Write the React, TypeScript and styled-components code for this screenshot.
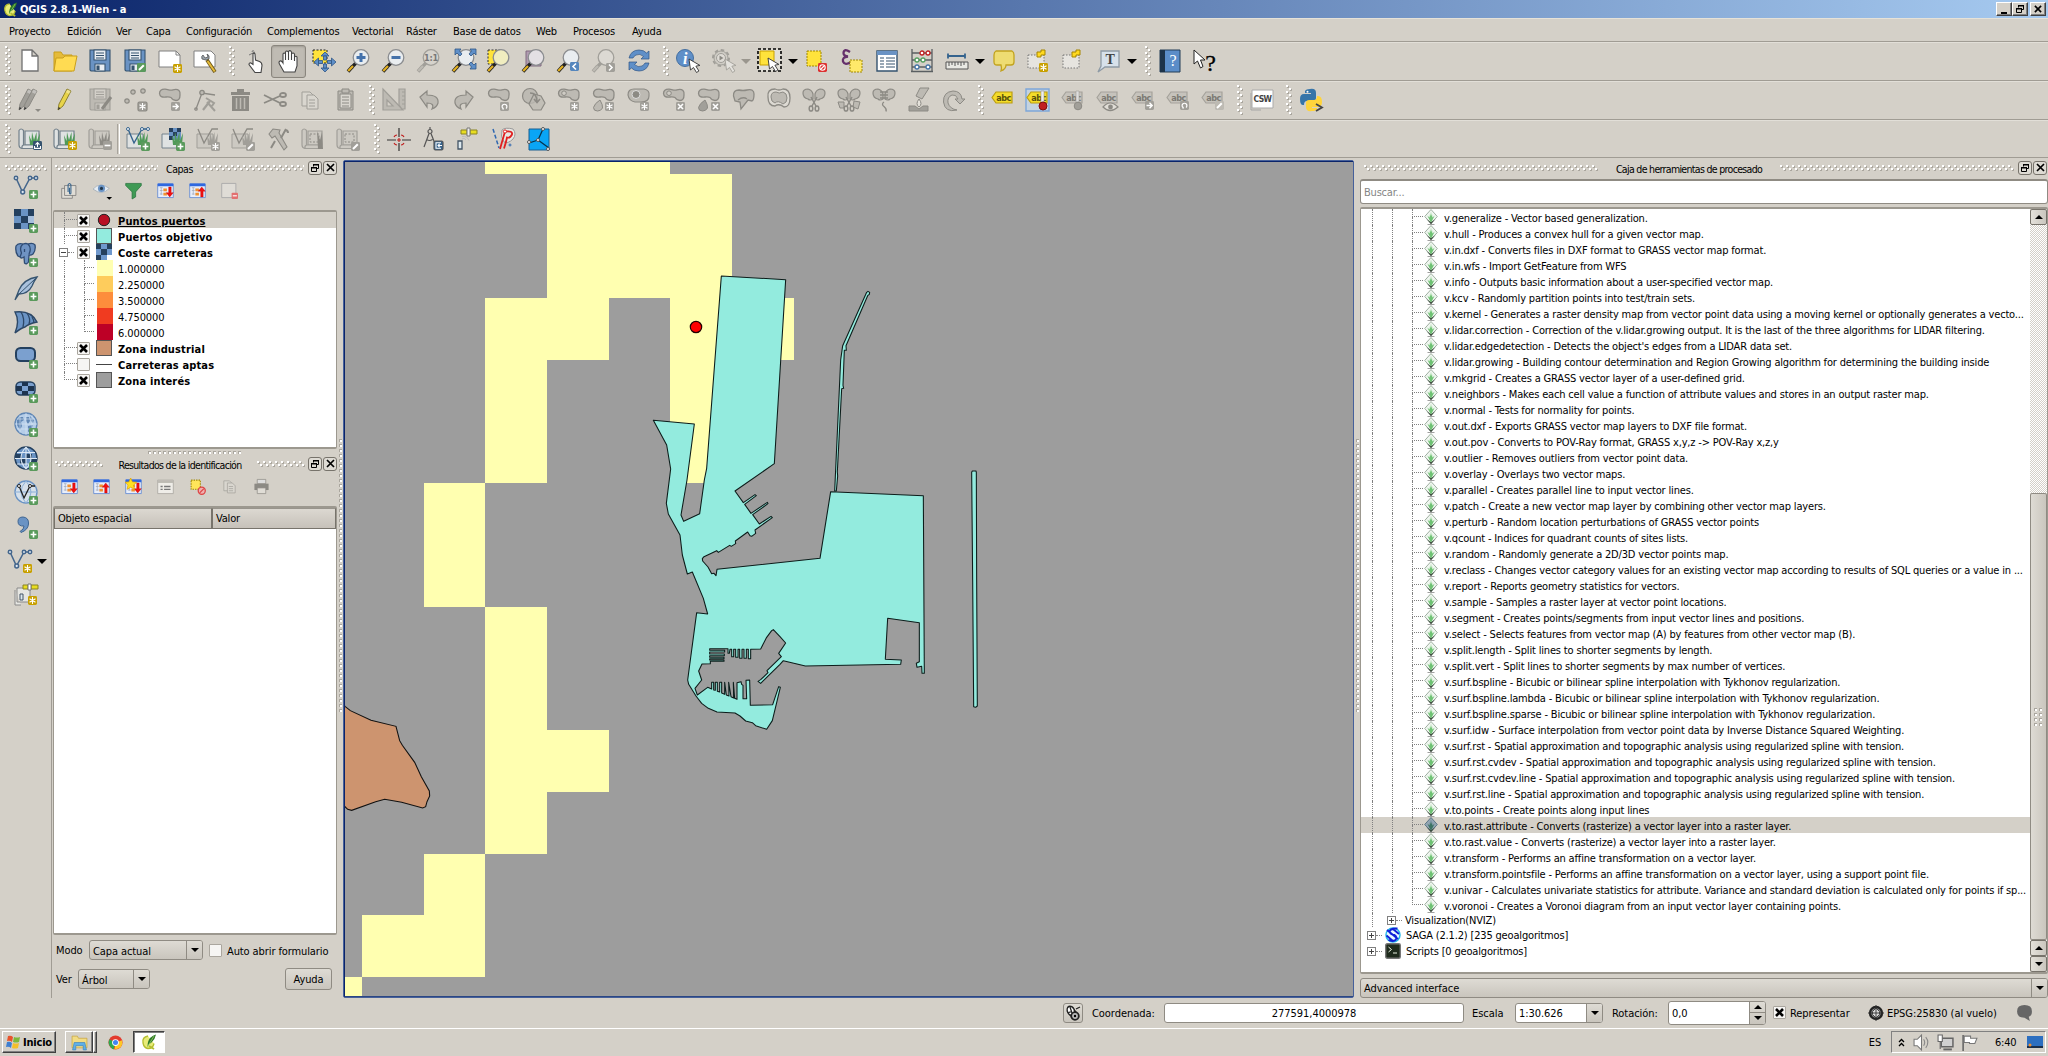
import React from "react";
import styled, { createGlobalStyle } from "styled-components";

const face = "#d4d0c8";
const font = '"DejaVu Sans Condensed", "DejaVu Sans", "Liberation Sans", sans-serif';

const Global = createGlobalStyle`
  html, body { margin: 0; padding: 0; background: ${face}; }
  body { font: 11px ${font}; font-stretch: condensed; color: #000; letter-spacing: -0.2px; overflow: hidden; }
  * { box-sizing: border-box; }
`;

/* ---------- shared pieces ---------- */

const Svg = styled.svg<{ $w?: number }>`
  width: ${(p) => p.$w ?? 24}px;
  height: ${(p) => p.$w ?? 24}px;
  flex: none;
  display: block;
  overflow: visible;
`;

const zig = `url("data:image/svg+xml,%3Csvg xmlns='http://www.w3.org/2000/svg' width='6' height='6'%3E%3Cpath d='M1 1h2v2H1zM4 4h2v2H4z' fill='%23aaa69e'/%3E%3Cpath d='M0 0h2v2H0zM3 3h2v2H3z' fill='%23fff'/%3E%3C/svg%3E")`;
const single = `url("data:image/svg+xml,%3Csvg xmlns='http://www.w3.org/2000/svg' width='5' height='5'%3E%3Cpath d='M0 0h3v3H0z' fill='%23aaa69e'/%3E%3Cpath d='M1 1h2v2H1z' fill='%23fff'/%3E%3C/svg%3E")`;

const HGrip = styled.div<{ $w?: number }>`
  height: 6px;
  ${(p) => (p.$w ? `width: ${p.$w}px; flex: none;` : "flex: 1;")}
  background: ${zig} 0 0 / 6px 6px;
`;

const VGrip = styled.div<{ $w?: number }>`
  width: ${(p) => p.$w ?? 13}px;
  height: 30px;
  flex: none;
  display: flex;
  justify-content: flex-end;
  padding-right: 1px;
  &::after { content: ""; width: 6px; height: 30px; background: ${zig} 0 0 / 6px 6px; }
`;

const Screen = styled.div`
  width: 2048px;
  height: 1056px;
  display: flex;
  flex-direction: column;
  background: ${face};
  overflow: hidden;
  cursor: default;
  white-space: nowrap;
`;

/* ---------- title bar and menus ---------- */

const TitleBar = styled.div`
  height: 18px;
  flex: none;
  display: flex;
  align-items: center;
  gap: 2px;
  padding: 0 2px 0 3px;
  background: linear-gradient(90deg, #0a246a, #a6caf0);
  color: #fff;
  font-weight: bold;
  font-size: 11px;
  letter-spacing: -0.1px;
`;
const Grow = styled.div` flex: 1; `;
const WinBtn = styled.div<{ $gap?: boolean }>`
  width: 16px;
  height: 14px;
  margin-left: ${(p) => (p.$gap ? 2 : 0)}px;
  background: ${face};
  border: 1px solid;
  border-color: #fff #404040 #404040 #fff;
  box-shadow: inset -1px -1px #808080;
  display: flex;
  align-items: center;
  justify-content: center;
`;
const WinBtns = styled.div` display: flex; `;

const MenuBar = styled.div`
  height: 24px;
  flex: none;
  display: flex;
  align-items: center;
  padding: 2px 0 0 9px;
  border-top: 1px solid #e6e2d8;
  border-bottom: 1px solid #a09c94;
`;
const MenuItem = styled.div<{ $w: number }>` width: ${(p) => p.$w}px; `;

/* ---------- toolbars ---------- */

const ToolBar = styled.div<{ $h: number }>`
  height: ${(p) => p.$h}px;
  flex: none;
  display: flex;
  align-items: center;
  padding: 0 0 1px 1px;
  border-top: 1px solid #e2dfd8;
  border-bottom: 1px solid #a09c94;
`;
const Slot = styled.div<{ $on?: boolean }>`
  width: 35px;
  height: 34px;
  flex: none;
  display: flex;
  align-items: center;
  justify-content: center;
  ${(p) => p.$on && "border: 1px solid #8a867e; border-radius: 3px; background: #bfbbb3; box-shadow: inset 0 1px 2px #a09c94; height: 33px;"}
`;
const Drop = styled.div<{ $off?: boolean }>`
  width: 12px;
  flex: none;
  display: flex;
  justify-content: center;
  &::after {
    content: "";
    border: 5px solid transparent;
    border-bottom: 0;
    border-top-color: ${(p) => (p.$off ? "#9a968e" : "#000")};
  }
`;
const Sep = styled.div` width: 3px; height: 30px; border-left: 1px solid #a8a49c; border-right: 1px solid #fff; `;

/* ---------- badges drawn over icons ---------- */

const Badge = ({ k, c = "#5a9a5c", x = 15, y = 15 }: { k: string; c?: string; x?: number; y?: number }) => (
  <g transform={`translate(${x} ${y})`}>
    <rect x="0" y="0" width="9" height="9" rx="1.4" fill={c} />
    <g stroke="#fff" strokeWidth="1.6" fill="none">
      {k === "plus" && <path d="M4.5 1.6v5.8M1.6 4.5h5.8" />}
      {k === "minus" && <path d="M1.6 4.5h5.8" />}
      {k === "star" && <path strokeWidth="1.1" d="M4.5 1v7M1.5 2.7l6 3.6M1.5 6.3l6-3.6" />}
      {k === "x" && <path d="M2 2l5 5M7 2L2 7" />}
      {k === "right" && <path d="M1.5 4.5h5M4.5 1.8l2.7 2.7-2.7 2.7" strokeWidth="1.4" />}
      {k === "pen" && <path d="M2 7l4.8-4.8" strokeWidth="2" />}
      {k === "lt" && <path d="M6 1.5L3 4.5l3 3" />}
      {k === "gt" && <path d="M3 1.5l3 3-3 3" />}
      {k === "rot" && <path d="M3 6.5a2.4 2.4 0 1 1 3 0M3 7.6l.2-2" strokeWidth="1.2" />}
      {k === "up" && <path d="M4.5 6V2M2.5 3.6l2-2 2 2M1.5 5v2.4h6V5" strokeWidth="1.1" />}
      {k === "no" && <><circle cx="4.5" cy="4.5" r="2.7" strokeWidth="1.1" /><path d="M3 6l3-3" strokeWidth="1.1" /></>}
      {k === "in" && <path d="M7 1.8H2v5.4h5M8 4.5H4M5.6 2.9L4 4.5l1.6 1.6" strokeWidth="1.1" />}
    </g>
  </g>
);

const G = "#a19f99";
const GD = "#8c8a84";
const GL = "#bdbab3";
const gold = "#c8a000";

const Blob = ({ f = GL, s = GD, ring = false }: { f?: string; s?: string; ring?: boolean }) => (
  <g>
    <path d="M1.500 5.500Q1.500 1 7 1.200c4 .3 5 1.600 8 .6C21 .3 22.500 3.500 22 7q0 5.500-4 5.500-3 0-5-3-2-1-5-.5Q2 10 1.500 5.500z" fill={f} stroke={s} strokeWidth="1.300" />
    {ring && <circle cx="7" cy="5.200" r="2.300" fill="#cfccc5" stroke={s} />}
  </g>
);
const Lens = ({ f = "#e9edf0", s = "#8b8d90", h = "#e3b021", d = "#222" }: { f?: string; s?: string; h?: string; d?: string }) => (
  <g>
    <path d="M9 14L4.500 18.500" stroke={d} strokeWidth="3.200" />
    <path d="M5.500 17.500L1 22.500" stroke={d} strokeWidth="3.600" />
    <path d="M6 17L1.200 22" stroke={h} strokeWidth="2.200" />
    <circle cx="14" cy="8.500" r="7.800" fill={f} stroke={s} strokeWidth="1.300" />
  </g>
);
const Pointer = ({ x = 0, y = 0, f = "#fff", s = "#333" }: { x?: number; y?: number; f?: string; s?: string }) => (
  <path transform={`translate(${x} ${y})`} d="M0 0l1.500 11 3-2.500 3 5 2.400-1.500-3-4.800 4-.8z" fill={f} stroke={s} strokeWidth="0.900" />
);
const VLine = ({ c = "#44668c" }: { c?: string }) => (
  <g stroke={c} strokeWidth="1.500" fill="#dfe8f2">
    <path d="M2 3l6.500 14L16 3h6" fill="none" />
    <circle cx="2" cy="3" r="1.700" /><circle cx="8.700" cy="17" r="1.900" /><circle cx="16" cy="3" r="1.700" /><circle cx="22" cy="3" r="1.700" />
  </g>
);
const Grass = ({ c = "#4f9a58" }: { c?: string }) => (
  <path d="M12 18L11 8l2.500 6L14 5l2 8 2.500-8 .3 9L22 6l-1 12z" fill={c} />
);
const Region = ({ c = "#74828c", f = "#dfe2e2" }: { c?: string; f?: string }) => (
  <g fill={f} stroke={c} strokeWidth="1.200">
    <path d="M7 4h14v14H7z" />
    <path d="M1 3.500q2-3 4.500 0V18q5 0 12 0 3 1.500 0 3.500H4Q1 21 1 18z" />
    <path d="M5.500 18q-2 .5-1.500 3.500" fill="none" />
  </g>
);
const Scissor = ({ c = GD }: { c?: string }) => (
  <g fill="none" stroke={c} strokeWidth="1.500"><path d="M9 9l5 9M15 9l-5 9" /><ellipse cx="9" cy="20.500" rx="1.800" ry="2.600" /><ellipse cx="15" cy="20.500" rx="1.800" ry="2.600" /></g>
);
const Wings = () => (
  <path d="M1 5q0-4 5-4 4 1 5 5v5q-3 2-5 0-5-1-5-6zM23 5q0-4-5-4-4 1-5 5v5q3 2 5 0 5-1 5-6z" fill={GL} stroke={GD} strokeWidth="1.200" />
);
const Label = ({ f = "#c6c3bc", s = "#a5a29b", t = "#7b7973" }: { f?: string; s?: string; t?: string }) => (
  <g>
    <path d="M1 9.500l4-5.500h16v11H5z" fill={f} stroke={s} strokeWidth="1.200" />
    <text x="12.500" y="12.700" textAnchor="middle" fontFamily="DejaVu Sans" fontSize="9" fontWeight="bold" letterSpacing="-.6" fill={t}>abc</text>
  </g>
);
const Pencil = ({ f = "#e8d44a", s = "#8d8130", x = 0 }: { f?: string; s?: string; x?: number }) => (
  <g transform={`translate(${x} 0)`}><path d="M14 1l4 2-8 15-5 4 1-6z" fill={f} stroke={s} /><path d="M14.500 1.500l3.300 1.600-1.600 3-3.400-1.800z" fill="#fff" opacity=".35" /><path d="M5 22l.6-3 2 1.200z" fill="#333" /></g>
);
const Floppy = ({ f = "#6a93c4", s = "#35536f", l = "#e9eef3" }: { f?: string; s?: string; l?: string }) => (
  <g stroke={s} strokeWidth="1.100"><path d="M2 1h20v21H3l-1-1z" fill={f} /><path d="M6 1h12v10H6z" fill={l} /><path d="M8 4h8M8 6.500h8M8 9h8" /><path d="M7 15h10v7H7z" fill={l} /><path d="M9 17h2v3.500H9z" fill={s} /></g>
);
const Elephant = ({ c = "#6f93c3" }: { c?: string }) => (
  <g fill={c} stroke="#2f4c74" strokeWidth="1.300">
    <path d="M2 3Q4-.5 9 1q3-1 5 0 5-1.500 7 1 1 5-2 9-2 1.500-4 1l-.5 7q-2 3-4 1l-.5-6q-3 2-4 0l-2-1Q1 9 2 3z" />
    <path d="M9 1Q5 4 7.500 10L6 14M14 1q4 4 1 10M10.500 6v3" fill="none" />
  </g>
);
const WinTree = ({ children }: { children?: React.ReactNode }) => (
  <g><path d="M1 3h22v19H1z" fill="#e8eefa" stroke="#4b7ad0" /><path d="M1 2h22v4H1z" fill="#2f68e0" /><path d="M4 8h4M4 12h4M4 17h4M6 8v10" stroke="#a0a8b8" /><path d="M9 9h5v4H9zM9 15h5v4H9z" fill="#f09030" />{children}</g>
);
const ArrowDown = <path d="M16.500 7h3.500v8h3l-5 6-5-6h3.500z" fill="#f01010" stroke="#b00" strokeWidth=".5" />;
const ArrowUp = <path d="M16.500 21h3.500v-8h3l-5-6-5 6h3.500z" fill="#f01010" stroke="#b00" strokeWidth=".5" />;

const icons: Record<string, React.ReactNode> = {
  new: <path d="M4 1h10l6 6v15H4zM14 1v6h6" fill="#fff" stroke="#707070" strokeWidth="1.300" />,
  open: <g stroke="#c99f1c" strokeWidth="1"><path d="M1 3h7l2 3h9v16H1z" fill="#e5bb3a" /><path d="M3 9h7l2-2h12l-3 15H1z" fill="#ffdb52" /></g>,
  save: <Floppy />,
  saveas: <g><Floppy /><Badge k="pen" x={14} y={14} /></g>,
  composer: <g><path d="M1 2h17l4 4v12H1z" fill="#fff" stroke="#808080" /><path d="M18 2v4h4" fill="none" stroke="#808080" /><Badge k="star" c={gold} /></g>,
  composerMgr: <g><path d="M1 2h17l4 4v12H1z" fill="#fff" stroke="#808080" /><path d="M10 6l2 3 3-1-1-3q3 1 2 5l-3 1-4-1q-1-3 1-4z" fill="#9aa4ac" stroke="#555" strokeWidth=".8" /><path d="M14 11l8 12" stroke="#6a5518" strokeWidth="3.600" /><path d="M14.500 12l7.200 10.500" stroke="#e5bb3a" strokeWidth="2" /></g>,
  touch: <g><path d="M10 3q0-2 2-1M7 6l6-3" stroke="#777" fill="none" /><path d="M11 4.500q1.500-1 2 .5l.5 6 4 1.500q2.500 1 2.500 4l-1 7h-6l-6-8q0-2 2-1.500l2 1.500z" fill="#fff" stroke="#444" strokeWidth="1.100" /></g>,
  hand: <path d="M7 23l-4-7q-2-3 0-4 1.500-.5 3 2V5q1-2 2.500 0V3q1-2 3 0v-.5q1.500-2 3 .5v2q1.500-2 3 0v3q1.500-1.500 2.500 0v9l-2 6z M8.500 4v7M11.500 3v8M14.500 3v8M17.500 6v6" fill="#fff" stroke="#444" strokeWidth="1.100" />,
  pansel: <g><path d="M1 1h14v13H1z" fill="#ffe33b" stroke="#222" strokeDasharray="2 1.500" /><g fill="#5f8fc8" stroke="#2f5585" strokeWidth=".8"><path d="M13 3l4 4h-8zM13 23l4-4h-8zM2 13l4.500-4v8zM24 13l-4.500-4v8z" /><path d="M11.500 7h3v4h-3zM11.500 15h3v4h-3zM6.500 11.500h4v3h-4zM15.500 11.500h4v3h-4z" /></g></g>,
  zin: <g><Lens /><path d="M14 4v9M9.500 8.500h9" stroke="#4472ab" strokeWidth="3" /></g>,
  zout: <g><Lens /><path d="M9.500 8.500h9" stroke="#4472ab" strokeWidth="3" /></g>,
  z11: <g><Lens f="#d6d3cc" s={G} h={GL} d={G} /><text x="14" y="12" fontSize="9" fontWeight="bold" textAnchor="middle" fill="#777">1:1</text></g>,
  zfull: <g><Lens /><path d="M3 0h6L7.500 2l2.500 3-2 2-3-3-2 2zM24 0h-6l1.500 2L17 5l2 2 3-3 2 2zM24 20h-6l1.500-2-2.500-3 2-2 3 3 2-2z" fill="#5f8fc8" stroke="#2f5585" strokeWidth=".8" /></g>,
  zsel: <g><path d="M1 1h13v14H1z" fill="#ffe33b" stroke="#333" strokeDasharray="2 1.500" /><Lens f="#f0edc0" /></g>,
  zlayer: <g><path d="M4 2h15v15H4z" fill="#b09bb0" stroke="#806a80" /><Lens f="#e4e0e4" /></g>,
  zprev: <g><Lens /><Badge k="lt" c="#5586bd" x={13} y={13} /></g>,
  znext: <g><Lens f="#dcd9d3" s={G} h={GL} d={G} /><Badge k="gt" c={G} x={14} y={14} /></g>,
  refresh: <g fill="#5f8fc8" stroke="#2f5585" strokeWidth=".7"><path d="M2 9Q4 1 12 1q5 0 7.500 3L22 2v8h-8l2.500-2.500Q13 4 9 6q-2 1-3 3z" /><path d="M22 14q-2 8-10 8-5 0-7.500-3L2 21v-8h8l-2.500 2.500Q11 19 15 17q2-1 3-3z" /></g>,
  identify: <g><circle cx="9" cy="9" r="8.500" fill="#5f8fc8" stroke="#456f9f" /><text x="9" y="15" fontFamily="Liberation Serif" fontStyle="italic" fontWeight="bold" fontSize="16" textAnchor="middle" fill="#fff">i</text><Pointer x={13} y={10} /></g>,
  action: <g><circle cx="10" cy="9" r="8" fill="none" stroke={G} strokeWidth="2" strokeDasharray="3.500 2.700" /><circle cx="10" cy="9" r="7" fill="#cfccc5" stroke={G} /><circle cx="10" cy="9" r="4.500" fill="#dedbd5" stroke={G} /><path d="M8.500 6.500l4 2.500-4 2.500z" fill={GD} /><Pointer x={14} y={10} f="#e4e2dd" s={G} /></g>,
  select: <g><path d="M0 0h23v22H0z" fill="#e2e0d8" stroke="#000" strokeWidth="1.600" strokeDasharray="3 2" /><path d="M2 2h14v14H2z" fill="#ffe33b" stroke="#c8a000" /><Pointer x={10} y={9} /></g>,
  desel: <g><path d="M2 2h14v15H2z" fill="#ffe33b" stroke="#a08800" strokeDasharray="2 1" /><Badge k="no" c="#dd3030" x={13} y={14} /></g>,
  expr: <g><path d="M10 3Q4-1 3.500 4q0 3 4.500 3.500-6 .5-5 5 2 4.500 8 .5" fill="none" stroke="#65306b" strokeWidth="2.300" /><path d="M10 11h12v12H10z" fill="#ffe96a" stroke="#a08800" strokeDasharray="2 1" /></g>,
  table: <g><path d="M2 2h20v20H2z" fill="#fff" stroke="#35536f" strokeWidth="1.400" /><path d="M2 2h20v4H2z" fill="#6a93c4" /><path d="M5 9h4M11 9h9M5 12h4M11 12h9M5 15h4M11 15h9M5 18h4M11 18h9" stroke="#35536f" strokeWidth="1.200" /></g>,
  abacus: <g strokeWidth="1.300"><path d="M2 0v23M22 0v23M1 22.500h22M2 4h20M2 11h20M2 18h20" stroke="#5a5f62" fill="none" /><g fill="#fff"><g stroke="#c02020"><circle cx="12" cy="4" r="2" /><circle cx="18" cy="4" r="2" /></g><g stroke="#55a060"><circle cx="7" cy="11" r="2" /><circle cx="13" cy="11" r="2" /></g><g stroke="#4575a8"><circle cx="7" cy="18" r="2" /><circle cx="18" cy="18" r="2" /></g></g></g>,
  measure: <g fill="none" stroke="#35638d"><path d="M3 7h17M3 4.500v5M20 4.500v5" strokeWidth="1.800" /><path d="M1 13h22v7H1z" stroke="#555" fill="#e9e9e4" /><path d="M4 13v4M7 13v3M10 13v4M13 13v3M16 13v4M19 13v3" stroke="#555" /></g>,
  tip: <path d="M4 2h16q2 1 2 4v7q0 3-3 3h-5q0 4-5 6 1-3 0-6H5q-3 0-3-3V6q0-3 2-4z" fill="#eedc72" stroke="#c2a31f" strokeWidth="1.300" />,
  bmnew: <g><path d="M1 6h16v13H1z" fill="#e6e4df" stroke="#777" strokeDasharray="1.500 1.500" /><path d="M10 3h4V1h4v5h-4v2h-4z" fill="#ffd91f" stroke="#a58500" /><Badge k="star" c={gold} x={12} y={14} /></g>,
  bmshow: <g><path d="M1 6h16v13H1z" fill="#e6e4df" stroke="#777" strokeDasharray="1.500 1.500" /><path d="M10 3h4V1h4v5h-4v2h-4z" fill="#ffd91f" stroke="#a58500" /></g>,
  anno: <g><path d="M4 2h18v16H8l-7 5 3-6z" fill="#d7e1ea" stroke="#8e9aa5" strokeWidth="1.300" /><text x="13" y="15" fontFamily="Liberation Serif" fontSize="14" fontWeight="bold" textAnchor="middle" fill="#444">T</text></g>,
  help: <g><path d="M2 1h20v22H2z" fill="#5b8dc8" stroke="#223c57" /><path d="M2 1h5v22H2z" fill="#1d3349" /><text x="15" y="17" fontFamily="Liberation Serif" fontSize="16" textAnchor="middle" fill="#fff">?</text></g>,
  whats: <g><path d="M1 1v14l3.500-3 3 7 2.500-1.500L7.500 11h4.500z" fill="#fff" stroke="#222" /><text x="17.500" y="21.500" fontFamily="Liberation Serif" fontSize="24" textAnchor="middle" fill="#000" stroke="#000" strokeWidth=".3">?</text></g>,

  edits: <g><Pencil f={G} s={GD} x={-4} /><Pencil f={G} s={GD} x={1} /><path d="M17 21h6l-3 3z" fill={GD} /></g>,
  pencil: <Pencil />,
  saveG: <g><Floppy f={GL} s={G} l="#d2cfc8" /><path d="M14 21l9-12" stroke={GD} strokeWidth="3" /></g>,
  ptsG: <g fill={GL} stroke={GD} strokeWidth="1.200"><circle cx="10" cy="4" r="2.200" /><circle cx="20" cy="3" r="2.200" /><circle cx="4" cy="13" r="2.200" /><Badge k="star" c={G} x={15} y={14} /></g>,
  moveG: <g><Blob /><Badge k="right" c={G} x={13} y={14} /></g>,
  nodeG: <g fill="none" stroke={GD} strokeWidth="1.300"><path d="M3 21L9 5l13 2" /><circle cx="9" cy="4.500" r="2.200" fill={GL} /><circle cx="3" cy="21" r="1.200" /><path d="M10 22l7-9" strokeWidth="2.200" stroke={G} /><path d="M13 10l8 5-2 3M14 14l8 9" strokeWidth="2" stroke={G} /></g>,
  trash: <g fill={GD}><path d="M3 4h19v3H3zM9 1h7v3H9z" /><path d="M4 8h17v15H4z" /><path d="M8.500 10v11M12.500 10v11M16.500 10v11" stroke={GL} strokeWidth="1.500" /></g>,
  cut: <g fill="none" stroke={GD} strokeWidth="1.800"><path d="M1 7l16 8M1 15l16-7" /><ellipse cx="20" cy="7" rx="3" ry="2" /><ellipse cx="20" cy="16" rx="3" ry="2" /></g>,
  copy: <g fill="#d9d6cf" stroke={G}><path d="M4 4h8l3 3v11H4z" /><path d="M9 7h7l4 4v10H9z" /><path d="M11 12h6M11 15h6M11 18h6" /></g>,
  paste: <g fill="#d9d6cf" stroke={GD}><path d="M5 3h15v19H5z" fill={GL} /><path d="M7 6h11v14H7z" /><path d="M9 1h7v4H9z" fill={GL} /><path d="M9 9h7M9 12h7M9 15h7M9 18h7" /></g>,
  cad: <g fill={GL} stroke={G} strokeWidth="1.200"><path d="M1 1v21h20zM5 12v6h6z" fillRule="evenodd" /><path d="M17 1h6v20h-3l-3-4z" /><path d="M20 4h3M20 8h3M20 12h3M20 16h3" /></g>,
  undo: <path d="M3 9l7-6v4q12 0 11 8-1 4-6 6 3-6-5-6v4z" fill={GL} stroke={GD} strokeWidth="1.200" />,
  redo: <path d="M21 9l-7-6v4q-12 0-11 8 1 4 6 6-3-6 5-6v4z" fill={GL} stroke={GD} strokeWidth="1.200" />,
  rotG: <g><Blob /><Badge k="rot" c={G} x={13} y={14} /></g>,
  simp: <g fill={GL} stroke={GD} strokeWidth="1.200"><circle cx="8" cy="8" r="7.500" /><path d="M12 6l7 2 4 7-4 7h-8l-4-6z" fillOpacity=".8" /><path d="M8 5q7 0 7 9M12 11l3 3.500 3-3.500" fill="none" strokeWidth="1.600" /></g>,
  ringG: <g><Blob ring /><Badge k="star" c={G} x={13} y={14} /></g>,
  partG: <g><Blob /><path d="M8 12q3 5 2.500 8-1.500 3-5 3-4 0-4-3.500 1-4 6.500-7.500z" fill={GL} stroke={GD} /><Badge k="star" c={G} x={13} y={14} /></g>,
  fillG: <g><path d="M1 7q0-6 6-6h10q6 1 5 7 0 6-8 6H8q-6-1-7-7z" fill={GL} stroke={GD} strokeWidth="1.200" /><circle cx="9" cy="6.500" r="4" fill={GD} stroke="#ddd" /><Badge k="star" c={G} x={13} y={14} /></g>,
  delring: <g><Blob ring /><Badge k="x" c={G} x={14} y={14} /></g>,
  delpart: <g><Blob /><path d="M8 12q3 5 2.500 8-1.500 3-5 3-4 0-4-3.500 1-4 6.500-7.500z" fill={G} stroke={GD} /><Badge k="x" c={G} x={14} y={14} /></g>,
  reshape: <path d="M1.500 8Q1 2 7 2q4 1 8 0 7-1.500 7 4 0 6-2 7l-4-1-7 9-1-7-5-1z M6 12q5-4 9-1" fill={GL} stroke={GD} strokeWidth="1.300" />,
  offset: <g><path d="M1 9Q0 1 8 1q4 2 8 0 7 0 7 9 0 9-6 9-5-4-9-1-7 0-7-9z" fill="#dddad3" stroke={GD} strokeWidth="1.300" /><path d="M4 9q0-5 5-5 3 2 7 0 4 1 4 6 0 5-4 6-5-4-8-1-4-1-4-6z" fill={GL} stroke={GD} /></g>,
  splitG: <g><Wings /><Scissor /></g>,
  splitP: <g><Wings /><path d="M1 14h6v6H3zM17 13l6 1-2 7-5-2z" fill={GL} stroke={GD} /><Scissor /></g>,
  mergeG: <g><Wings /><path d="M8 4h8M8 7h8M8 10h8M12 14q-3 2 0 4.500t2 5" stroke={GD} fill="none" strokeWidth="1.300" /></g>,
  weld: <g><path d="M13 0h9l-7 11-6-3z" fill={GL} stroke={GD} /><path d="M12 11q4 5 0 8-4-3 0-8z" fill="#e4e1da" stroke={GD} /><path d="M2 18h6l4 3 4-3h5v5H2z" fill={G} stroke={GD} /></g>,
  rotpt: <path d="M15 22Q3 25 1.500 14 1 4 11 3q8 0 9 8h3l-5 5-5-5h3q-2-5-6-4-5 2-4 8 2 6 9 7z" fill={GL} stroke={GD} />,
  lab: <Label f="#f4dc29" s="#bb9d12" t="#57500c" />,
  labsel: <g><path d="M0 1h23v22H0z" fill="#c5d3df" stroke="#7da7d9" strokeWidth="1.400" /><Label f="#f4dc29" s="#bb9d12" t="#57500c" /><path d="M15 3h3v11h-3z" fill="#eee" stroke="#999" strokeWidth=".6" /><circle cx="17" cy="18" r="4" fill="#c02020" stroke="#801010" /></g>,
  labpin: <g><Label /><path d="M15 3h3v11h-3z" fill="#ddd" stroke={G} strokeWidth=".6" /><circle cx="17" cy="18" r="3.800" fill={G} stroke={GD} /></g>,
  labeye: <g><Label /><path d="M7 19q7-8 15 0-8 7-15 0z" fill="#e0ddd6" stroke={GD} strokeWidth="1.200" /><circle cx="14.500" cy="19" r="2.400" fill={GD} /></g>,
  labmove: <g><Label /><Badge k="right" c={G} x={14} y={13} /></g>,
  labrot: <g><Label /><Badge k="rot" c={G} x={14} y={13} /></g>,
  labedit: <g><Label /><Badge k="pen" c={GL} x={14} y={13} /></g>,
  csw: <g><path d="M1 5v17h10" fill="none" stroke="#a5a5a5" /><path d="M2 2h21v18H2z" fill="#fff" stroke="#aaa" /><text x="12.500" y="14" fontFamily="DejaVu Sans" fontSize="8.500" fontWeight="bold" letterSpacing="-.6" textAnchor="middle" fill="#444">CSW</text></g>,
  python: <g><path d="M11 1q6-1 6 4v5q0 3-3 3H8q-3 0-3 4H4Q1 17 1 11q0-5 4-5h7V5H6V3q1-2 5-2z" fill="#3775a9" /><path d="M13 23q-6 1-6-4v-4q0-3 3-3h5q3 0 3-4h1q4 0 4 6 0 5-4 5h-6v1h5v1q-1 2-5 2z" fill="#ffd43b" /><circle cx="8.500" cy="3.700" r="1" fill="#fff" /><path d="M17 16l6 3.500-6 3.500" fill="none" stroke="#444" strokeWidth="1.800" /></g>,

  gOpen: <g><Region /><Grass /><Badge k="up" c="#35536f" x={15} y={14} /></g>,
  gNew: <g><Region /><Grass /><Badge k="star" c={gold} x={15} y={14} /></g>,
  gClose: <g><Region c={G} f="#ccc9c2" /><Grass c={GD} /><Badge k="minus" c={G} x={15} y={14} /></g>,
  gVec: <g><path d="M1 7h16v14H1z" fill="#dfe2e2" stroke="#74828c" /><path d="M2 2l6 14L16 2h6" fill="none" stroke="#35638d" strokeWidth="1.400" /><circle cx="2" cy="2" r="1.500" fill="#fff" stroke="#35638d" /><circle cx="16" cy="2" r="1.500" fill="#fff" stroke="#35638d" /><circle cx="22" cy="2" r="1.500" fill="#fff" stroke="#35638d" /><Grass /><Badge k="plus" /></g>,
  gRas: <g><path d="M1 7h16v14H1z" fill="#dfe2e2" stroke="#74828c" /><path d="M8 1h12v12H8z" fill="#6a93c4" /><path d="M8 1h4v4H8zM16 1h4v4h-4zM12 5h4v4h-4zM8 9h4v4H8z" fill="#26405c" /><Grass /><Badge k="plus" /></g>,
  gVecN: <g><path d="M1 7h16v14H1z" fill="#ccc9c2" stroke={G} /><path d="M2 2l6 14L16 2h6" fill="none" stroke={GD} strokeWidth="1.300" /><Grass c={G} /><Badge k="star" c={G} /></g>,
  gVecE: <g><path d="M1 7h16v14H1z" fill="#ccc9c2" stroke={G} /><path d="M2 2l6 14L16 2h6" fill="none" stroke={GD} strokeWidth="1.300" /><Grass c={G} /><Badge k="pen" c={G} /></g>,
  gTools: <g fill={GL} stroke={GD} strokeWidth="1.100"><path d="M3 7l4-5 7 1-1 3 8 14-3 3L9 9l-3 2z" /><path d="M20 2l-5 9M9 14l-4 7M19 3q3 0 3 3" fill="none" strokeWidth="2" /></g>,
  gReg: <g><Region c={G} f="#ccc9c2" /><path d="M9 7h9v8H9z" fill="none" stroke={GD} strokeDasharray="2 1.500" /><path d="M17 22l-1-18 3 9 2-8 1 17z" fill={GD} /></g>,
  gRegE: <g><Region c={G} f="#ccc9c2" /><path d="M9 7h9v8H9z" fill="none" stroke={GD} strokeDasharray="2 1.500" /><Badge k="pen" c={G} /></g>,
  cross: <g stroke="#333" strokeWidth="1.200" fill="none"><path d="M0 13h9M15 13h9M12 1v9M12 16v8" /><path d="M12 11v4M10 13h4M7 10q1-2 3-2M17 10q-1-2-3-2M7 16q1 2 3 2M17 16q-1 2-3 2" stroke="#c02020" /></g>,
  compass: <g fill="none" stroke="#555" strokeWidth="1.200"><circle cx="8" cy="4.500" r="2" /><path d="M8 0v2.500M7 6.500L3.500 16l-1.500 4M9 6.500l3.500 9M4.500 12.500q3 2 6 0" /><Badge k="in" c="#35638d" x={12} y={14} /></g>,
  gps: <g><path d="M4 3h6v4H4zM13 3h7v4h-7z" fill="#e8dd20" stroke="#8b8420" /><path d="M10 1h3v8h-3z" fill="#eee" stroke="#777" /><path d="M5 12q2-2 4 1M5 9.500q5-1 7 4" stroke="#bbb" fill="none" /><path d="M1 14h4v8H1z" fill="#dce8ee" stroke="#456" strokeWidth="1.300" /></g>,
  topo: <g fill="none"><path d="M10 3q3-3 11-1 4 5 0 10-5 5-9 3-4-5-2-12z" fill="#e8e8e4" stroke="#999" /><path d="M1 2l6 19" stroke="#3068b0" strokeDasharray="4 2" strokeWidth="1.500" /><path d="M8 22L13 4.500q8-1 7 3-2 4-5 3-1 5-3 11" stroke="#e02020" strokeWidth="1.800" /><circle cx="18" cy="18" r="1" stroke="#3068b0" /><circle cx="13" cy="4.500" r="1.600" stroke="#e02020" fill="#fff" /></g>,
  georef: <g><path d="M2 2h20v21H2z" fill="#0aa5f5" stroke="#1a5f90" /><path d="M16 2l-5 11-9 3M11 13l11 8" fill="none" stroke="#06334f" strokeWidth="1.300" /><g fill="#fff" stroke="#555"><circle cx="16" cy="2" r="1.500" /><circle cx="11" cy="13" r="1.500" /><circle cx="2" cy="15" r="1.500" /><circle cx="21" cy="22" r="1.500" /></g></g>,

  vAdd: <g><VLine /><Badge k="plus" /></g>,
  rAdd: <g><path d="M0 0h20v20H0z" fill="#6a93c4" /><path d="M0 0h7v7H0zM14 0h6v7h-6zM7 7h7v7H7zM0 14h7v6H0zM14 14h6v6h-6z" fill="#24405f" /><path d="M14 7h6v7h-6z" fill="#a8c0de" /><Badge k="plus" /></g>,
  pgAdd: <g><Elephant /><Badge k="plus" /></g>,
  slAdd: <g><path d="M23 0Q10 2 5 13L1 23l4-6q9 0 13-8 2-5 5-9z" fill="#a9c1dc" stroke="#35536f" strokeWidth="1.300" /><path d="M5 17L21 2" stroke="#35536f" /><Badge k="plus" /></g>,
  msAdd: <g><path d="M1 1q16-2 22 10-9 2-12 5-4 1-10 6Q6 10 1 1z" fill="#6a93c4" stroke="#2c4766" strokeWidth="1.400" /><path d="M7 1q4 6 2 15M13 2q4 6 2 11M18 6q2 3 2 6" fill="none" stroke="#2c4766" strokeWidth="1.300" /><Badge k="plus" /></g>,
  orAdd: <g><rect x="2" y="3" width="19" height="13" rx="4.500" fill="#7ba0cf" stroke="#24405f" strokeWidth="2" /><Badge k="plus" /></g>,
  orrAdd: <g><rect x="2" y="3" width="19" height="13" rx="4.500" fill="#7ba0cf" stroke="#24405f" strokeWidth="1.500" /><path d="M8 3h6v4H8zM2 7h6v5H2zM14 7h6v5h-6zM8 12h6v4H8z" fill="#1d3450" /><Badge k="plus" /></g>,
  wmsAdd: <g><circle cx="12" cy="11" r="11" fill="#b5cde8" stroke="#5f86b5" strokeWidth="1.300" /><path d="M3 7l3-3h3l1 3-3 2 1 4-2 4-3-5zM12 4h3l1 4-2 3-2-3zM16 3l4 4-1 3-2-2zM14 13l5-1-2 6-3 1z" fill="#6288b5" /><path d="M1 11h22M12 0v22M6 2v18M18 2v18M3 6h18M3 16h18" stroke="#dce8f5" strokeWidth=".6" /><Badge k="plus" /></g>,
  wcsAdd: <g><circle cx="12" cy="11" r="11" fill="#6a93c4" stroke="#24405f" strokeWidth="1.500" /><path d="M1.500 7h6v4h-6zM12 7h6v4h-6zM6 12h6v5H6zM17 12h5v5h-5z" fill="#24405f" /><path d="M12 0v22M12 0Q2 11 12 22M12 0q10 11 0 22M3 5.500h18M1 11.500h22M3 17h18" stroke="#dce8f5" strokeWidth="1.100" fill="none" /><Badge k="plus" /></g>,
  wfsAdd: <g><circle cx="12" cy="11" r="11" fill="#d6e0ea" stroke="#6a93c4" strokeWidth="1.300" /><path d="M1 11h22M12 0Q2 11 12 22M12 0q10 11 0 22" stroke="#8cb0d8" fill="none" /><path d="M5 5l5 12 6-12h5" stroke="#222" fill="none" strokeWidth="1.300" /><circle cx="5" cy="5" r="1.500" fill="#fff" stroke="#222" /><circle cx="16" cy="5" r="1.500" fill="#fff" stroke="#222" /><Badge k="plus" /></g>,
  csvAdd: <g><path d="M4 6.500Q4 2 9 2q6 .5 5.500 7Q14 15 7 17.500l-1-1q4-2 4-5.500-6 .5-6-4.500z" fill="#6a93c4" stroke="#3f6591" /><Badge k="plus" /></g>,
  vNew: <g><VLine /><Badge k="star" c={gold} /></g>,
  gpxNew: <g><path d="M1 7v15h6M3 5h13v14H3z" fill="#e6e6e2" stroke="#8a8a8a" /><path d="M9 2h5v4H9zM17 2h7v4h-7z" fill="#e8dd20" stroke="#8b8420" /><path d="M14 1h3v6h-3z" fill="#fff" stroke="#777" /><path d="M6 11h3v6H6z" fill="#dce8ee" stroke="#456" /><Badge k="star" c={gold} x={14} y={13} /></g>,

  groupAdd: <g><path d="M1 9h15v14H1z" fill="#e0ddd6" stroke="#707070" /><path d="M5 5h16v14H5z" fill="#e0ddd6" stroke="#707070" /><path d="M10 14V4q2-4 4 0v12q-1 2-2 0V8" fill="none" stroke="#35638d" strokeWidth="1.500" /></g>,
  eye: <g><path d="M0 10q10-11 23-1-10 11-23 1z" fill="#e6ecf2" stroke="#9aa6b0" /><circle cx="12" cy="9" r="5" fill="#6a93c4" /><circle cx="12" cy="9" r="2.200" fill="#22374c" /><path d="M19 21h8l-4 4z" fill="#000" /></g>,
  filter: <path d="M1 2h22v3l-8 9v7l-5 3V14L1 5z" fill="#3f9a55" stroke="#24703a" />,
  expand: <WinTree>{ArrowDown}</WinTree>,
  collapse: <WinTree>{ArrowUp}</WinTree>,
  starTree: <WinTree>{ArrowDown}<path d="M8 0l2.500 5.500 6 .5-4.500 4 1.500 6L8 13l-5 3 1.200-6L0 6l5.500-.5z" fill="#ffe020" stroke="#e0a000" /></WinTree>,
  removeL: <g><path d="M1 2h20v20H1z" fill="#dfdcd6" stroke="#aaa" strokeWidth="1.300" /><Badge k="minus" c="#e27070" x={15} y={15} /></g>,
  form: <g><path d="M1 3h22v19H1z" fill="#efede8" stroke={G} /><path d="M1 3h22v4H1z" fill={GL} /><path d="M5 12h3M10 12h9M5 16h3M10 16h9" stroke="#777" strokeWidth="1.800" /></g>,
  deselS: <g><path d="M3 3h13v13H3z" fill="#ffe55a" stroke="#a08800" strokeWidth="1.500" strokeDasharray="2 1.500" /><circle cx="18" cy="18" r="5" fill="#f0b0b0" stroke="#d44" strokeWidth="1.800" /><path d="M15 21l6-6" stroke="#d44" strokeWidth="1.800" /></g>,
  print: <g fill={GD}><path d="M6 2h12v6H6z" fill="#ddd" stroke={GD} /><path d="M2 8h20v9H2z" /><path d="M6 14h12v8H6z" fill="#e0ddd6" stroke={GD} /></g>,
};

const Icon = ({ n, w = 24 }: { n: string; w?: number }) => <Svg $w={w} viewBox="0 0 24 24">{icons[n]}</Svg>;

const Tools = ({ list }: { list: string[] }) => (
  <>
    {list.map((n, i) => {
      if (n === "|") return <VGrip key={i} $w={14} />;
      if (n === "||") return <VGrip key={i} $w={16} />;
      if (n === "^") return <VGrip key={i} $w={11} />;
      if (n === "v") return <Drop key={i} />;
      if (n === "vo") return <Drop key={i} $off />;
      if (n === "-") return <Sep key={i} />;
      return <Slot key={i} $on={n === "hand"}><Icon n={n} /></Slot>;
    })}
  </>
);

/* ---------- docks ---------- */

const Work = styled.div` height: 840px; flex: none; display: flex; `;
const SideBar = styled.div`
  width: 52px;
  flex: none;
  display: flex;
  flex-direction: column;
  padding: 7px 0 0 5px;
  border-right: 1px solid #a09c94;
`;
const SideSlot = styled.div<{ $drop?: boolean }>`
  height: 34px;
  width: 46px;
  display: flex;
  align-items: center;
  padding: 0 0 2px ${(p) => (p.$drop ? 3 : 9)}px;
  gap: 4px;
`;
const LeftDock = styled.div` width: 286px; flex: none; padding: 2px 0 0 1px; display: flex; flex-direction: column; `;
const DockTitle = styled.div<{ $pad?: number; $end?: number }>`
  height: 15px;
  flex: none;
  display: flex;
  align-items: center;
  padding: 0 ${(p) => p.$end ?? 0}px 0 ${(p) => p.$pad ?? 3}px;
`;
const TitleText = styled.div<{ $w: number; $ls?: number }>`
  width: ${(p) => p.$w}px;
  padding-top: 2px;
  text-align: center;
  flex: none;
  font-size: 10.5px;
  letter-spacing: ${(p) => p.$ls ?? -0.68}px;
`;
const DockBtn = styled.div`
  width: 14px;
  height: 14px;
  margin-left: 1px;
  border: 1px solid #77736b;
  border-radius: 3px;
  background: #dedbd4;
  display: flex;
  align-items: center;
  justify-content: center;
  flex: none;
`;
const SmallTools = styled.div<{ $mt: number; $h: number }>`
  display: flex;
  gap: 15px;
  margin-top: ${(p) => p.$mt}px;
  height: ${(p) => p.$h}px;
  padding-left: 8px;
  flex: none;
`;
const Frame = styled.div<{ $h: number }>`
  height: ${(p) => p.$h}px;
  width: 284px;
  flex: none;
  background: #fff;
  border: 2px solid #9c988f;
  border-left-width: 1px;
  border-right-width: 1px;
  border-radius: 2px;
  overflow: hidden;
`;
const LayerRow = styled.div<{ $sel?: boolean; $b?: boolean; $u?: boolean }>`
  height: 16px;
  display: flex;
  align-items: center;
  background: ${(p) => (p.$sel ? face : "transparent")};
  font-weight: ${(p) => (p.$b ? "bold" : "normal")};
  text-decoration: ${(p) => (p.$u ? "underline" : "none")};
  letter-spacing: ${(p) => (p.$b ? "0.15px" : "-0.1px")};
`;
const Name = styled.span` padding-top: 2px; `;
const Node = styled.div<{ $last?: boolean; $w: number }>`
  width: ${(p) => p.$w}px;
  height: 16px;
  flex: none;
  display: grid;
  grid-template-rows: 8px 8px;
  &::before { content: ""; border-left: 1px dotted #808080; border-bottom: 1px dotted #808080; }
  &::after { content: ""; border-left: ${(p) => (p.$last ? "0" : "1px dotted #808080")}; }
`;
const Pass = styled.div<{ $w: number }>` width: ${(p) => p.$w}px; height: 100%; flex: none; border-left: 1px dotted #808080; `;
const Dash = styled.div<{ $w: number }>` width: ${(p) => p.$w}px; flex: none; border-top: 1px dotted #808080; `;
const Space = styled.div<{ $w: number }>` width: ${(p) => p.$w}px; flex: none; `;
const Check = styled.div`
  width: 13px;
  height: 13px;
  border: 1px solid #aaa69e;
  border-radius: 1px;
  background: #f6f5f3;
  flex: none;
  display: flex;
  align-items: center;
  justify-content: center;
`;
const Swatch = styled.div<{ $c: string; $line?: boolean }>`
  width: 16px;
  height: 16px;
  flex: none;
  background: ${(p) => p.$c};
  border: ${(p) => (p.$line ? "1px solid #555" : "0")};
`;
const ExpanderBox = styled.div`
  width: 9px;
  height: 9px;
  border: 1px solid #808080;
  background: #fff;
  display: flex;
  align-items: center;
  justify-content: center;
  flex: none;
`;
const Expander = ({ open }: { open?: boolean }) => (
  <ExpanderBox><Svg $w={7} viewBox="0 0 7 7"><path d={open ? "M1 3.500h5" : "M1 3.500h5M3.500 1v5"} stroke="#444" /></Svg></ExpanderBox>
);
const Splitter = styled.div`
  height: 7px;
  display: flex;
  justify-content: center;
  align-items: center;
  flex: none;
  &::after { content: ""; width: 95px; height: 3px; background: ${single} 0 0 / 5px 5px; }
`;
const VSplit = styled.div<{ $w: number; $mt: number; $h: number }>`
  width: ${(p) => p.$w}px;
  flex: none;
  display: flex;
  justify-content: center;
  &::after { content: ""; width: 3px; margin-top: ${(p) => p.$mt}px; height: ${(p) => p.$h}px; background: ${single} 0 0 / 5px 5px; }
`;
const HeadRow = styled.div` display: flex; height: 21px; `;
const HeadCell = styled.div<{ $w: number }>`
  width: ${(p) => p.$w}px;
  border: 1px solid #77736b;
  border-top-color: #98948c;
  background: linear-gradient(#dcd8d1, #c6c1b9);
  display: flex;
  align-items: center;
  padding-left: 3px;
  letter-spacing: -0.2px;
`;
const FormRow = styled.div<{ $mt: number; $h: number }>`
  display: flex;
  align-items: center;
  height: ${(p) => p.$h}px;
  margin-top: ${(p) => p.$mt}px;
  padding: 0 6px 0 3px;
  letter-spacing: -0.1px;
  flex: none;
`;
const FormRowWide = styled.div` margin-top: 4px; height: 20px; flex: none; letter-spacing: -0.05px; `;
const Box = styled.div<{ $w?: number; $h: number; $white?: boolean; $center?: boolean }>`
  ${(p) => (p.$w ? `width: ${p.$w}px;` : "")}
  height: ${(p) => p.$h}px;
  flex: none;
  border: 1px solid #8f8b83;
  border-radius: 3px;
  background: ${(p) => (p.$white ? "#fff" : "linear-gradient(#dedbd4, #c9c5bd)")};
  display: flex;
  align-items: center;
  padding-left: ${(p) => (p.$center ? 0 : 3)}px;
  justify-content: ${(p) => (p.$center ? "center" : "flex-start")};
  overflow: hidden;
`;
const BoxArrow = styled.div`
  width: 16px;
  height: 100%;
  margin-left: auto;
  border-left: 1px solid #8f8b83;
  background: linear-gradient(#dedbd4, #c9c5bd);
  display: flex;
  flex-direction: column;
  align-items: center;
  justify-content: space-evenly;
`;
const Tri = styled.div<{ $up?: boolean }>`
  border: 4px solid transparent;
  ${(p) => (p.$up ? "border-top: 0; border-bottom-color: #000;" : "border-bottom: 0; border-top-color: #000;")}
`;
const SpinHalf = styled.div`
  flex: 1;
  align-self: stretch;
  display: flex;
  align-items: center;
  justify-content: center;
  & + & { border-top: 1px solid #8f8b83; }
`;
const Cell = styled.div<{ $w: number }>` width: ${(p) => p.$w}px; flex: none; padding-top: 1px; `;

/* ---------- map ---------- */

const MapFrame = styled.div`
  width: 1011px;
  height: 838px;
  margin-top: 2px;
  flex: none;
  border: 1px solid #46609a;
  border-radius: 2px;
  & > svg { display: block; border: 1px solid #0a246a; border-right: 0; border-bottom-color: #2b4683; width: 1009px; height: 836px; background: #9d9d9d; }
`;

/* ---------- processing toolbox ---------- */

const RightDock = styled.div` width: 688px; flex: none; padding-top: 2px; display: flex; flex-direction: column; `;
const Search = styled.div`
  height: 25px;
  margin-top: 4px;
  border: 1px solid #8f8b83;
  border-top-width: 2px;
  border-radius: 3px;
  background: #fff;
  color: #858585;
  display: flex;
  align-items: center;
  padding-left: 3px;
  flex: none;
`;
const TreeFrame = styled.div`
  height: 767px;
  margin-top: 3px;
  flex: none;
  display: flex;
  border: 2px solid #9c988f;
  border-left-width: 1px;
  border-right-width: 1px;
  border-radius: 2px;
  background: #fff;
`;
const TreeList = styled.div` width: 669px; flex: none; overflow: hidden; letter-spacing: -0.17px; `;
const AlgRow = styled.div<{ $sel?: boolean; $h?: number; $in?: number }>`
  height: ${(p) => p.$h ?? 16}px;
  display: flex;
  align-items: center;
  padding-left: ${(p) => p.$in ?? 11}px;
  background: ${(p) => (p.$sel ? face : "transparent")};
`;
const AlgName = styled.div`
  margin-left: 5px;
  padding-top: 2px;
  flex: 1;
  min-width: 0;
  white-space: nowrap;
`;
const Scroll = styled.div`
  width: 17px;
  flex: none;
  display: flex;
  flex-direction: column;
  background: repeating-conic-gradient(#fff 0 25%, #d4d0c8 0 50%) 0 0 / 2px 2px;
`;
const ScrollBtn = styled.div`
  height: 16px;
  flex: none;
  border: 1px solid #77736b;
  border-radius: 2px;
  background: linear-gradient(90deg, #e4e1da, #cac6be);
  display: flex;
  align-items: center;
  justify-content: center;
`;
const Track = styled.div` height: 268px; flex: none; `;
const Thumb = styled.div`
  flex: 1;
  border: 1px solid #8f8b83;
  border-radius: 2px;
  background: linear-gradient(90deg, #dedbd4, #cac6be);
  display: flex;
  align-items: center;
  justify-content: center;
  &::after { content: ""; width: 9px; height: 18px; background: ${single} 0 0 / 5px 5px; }
`;

/* ---------- status and task bars ---------- */

const StatusBar = styled.div`
  height: 31px;
  flex: none;
  display: flex;
  align-items: center;
  padding: 0 0 1px 1063px;
  border-bottom: 1px solid #fff;
  letter-spacing: -0.05px;
`;
const TaskBar = styled.div`
  flex: 1;
  display: flex;
  align-items: center;
  padding: 1px 2px 2px;
`;
const TaskBtn = styled.div<{ $w: number; $ml?: number; $in?: boolean; $flat?: boolean }>`
  width: ${(p) => p.$w}px;
  height: 22px;
  margin-left: ${(p) => p.$ml ?? 0}px;
  display: flex;
  align-items: center;
  justify-content: center;
  gap: 1px;
  font-weight: bold;
  flex: none;
  ${(p) =>
    !p.$flat &&
    (p.$in
      ? "background: #fff; border: 1px solid; border-color: #404040 #fff #fff #404040; box-shadow: inset 1px 1px #808080;"
      : "border: 1px solid; border-color: #fff #404040 #404040 #fff; box-shadow: inset -1px -1px #808080;")}
`;
const Tray = styled.div`
  width: 155px;
  height: 22px;
  margin-left: 10px;
  display: flex;
  align-items: center;
  gap: 7px;
  padding-left: 5px;
  border: 1px solid;
  border-color: #808080 #fff #fff #808080;
`;

const XMark = ({ w = 9 }: { w?: number }) => (
  <Svg $w={w} viewBox="0 0 9 9"><path d="M1 1l7 7M8 1L1 8" stroke="#000" strokeWidth="2.600" /></Svg>
);
const CloseX = () => <Svg $w={9} viewBox="0 0 9 9"><path d="M1 1l7 7M8 1L1 8" stroke="#000" strokeWidth="1.700" /></Svg>;
const RestoreI = () => <Svg $w={10} viewBox="0 0 10 10"><path d="M3.500 3.500V1.500h5v4h-2M1.500 4.500h5v4h-5z" fill="none" stroke="#000" /><path d="M3 1h6v1.500H3zM1 4h6v1.500H1z" /></Svg>;

const Logo = ({ w = 14 }: { w?: number }) => (
  <Svg $w={w} viewBox="0 0 16 16"><path d="M7 2Q1 3 2 9q1 5 5 5.500 5 0 6-5" fill="#e8ec78" stroke="#b4be30" strokeWidth="1.300" /><path d="M8 12l5 3" stroke="#b4be30" strokeWidth="2" /><path d="M6.500 13q0-6 2.500-9 3-3 6-3.500-1 5-4.500 8-3 1-4 4.500z" fill="#2f7a28" /><path d="M7 12L13 2" stroke="#a8d870" strokeWidth=".7" /></Svg>
);
const Raster = () => (
  <Svg $w={16} viewBox="0 0 16 16"><path d="M0 0h16v16H0z" fill="#6f98cc" /><path d="M0 0h5v5H0zM11 0h5v5h-5zM5 5h6v6H5zM0 11h5v5H0z" fill="#26405c" /><path d="M11 11h5v5h-5z" fill="#fff" /></Svg>
);
const Leaf = ({ sel }: { sel?: boolean }) => (
  <Svg $w={16} viewBox="0 0 16 16">
    <path d="M8 .5L14.300 7.500 8 14.500 1.700 7.500z" fill={sel ? "#93a5b4" : "#f1f6f1"} stroke={sel ? "#5d7786" : "#9fb0a1"} strokeWidth="1" />
    <path d="M8 2.500L10 7l-2 6-2-6z" fill={sel ? "#7d98a4" : "#d4ecd4"} />
    <path d="M8 14L4.300 6.500l2.200 2 1.500-3.500 1.500 3.500 2.200-2z" fill={sel ? "#3c7464" : "#6fc274"} />
    <path d="M3.500 10L8 13.300 12.500 10 8 15.300z" fill="#3a4a3c" /><path d="M4.500 15.500h7" stroke="#888" strokeWidth=".8" />
  </Svg>
);

const algs = [
  "v.generalize - Vector based generalization.",
  "v.hull - Produces a convex hull for a given vector map.",
  "v.in.dxf - Converts files in DXF format to GRASS vector map format.",
  "v.in.wfs - Import GetFeature from WFS",
  "v.info - Outputs basic information about a user-specified vector map.",
  "v.kcv - Randomly partition points into test/train sets.",
  "v.kernel - Generates a raster density map from vector point data using a moving kernel or optionally generates a vecto...",
  "v.lidar.correction - Correction of the v.lidar.growing output. It is the last of the three algorithms for LIDAR filtering.",
  "v.lidar.edgedetection - Detects the object's edges from a LIDAR data set.",
  "v.lidar.growing - Building contour determination and Region Growing algorithm for determining the building inside",
  "v.mkgrid - Creates a GRASS vector layer of a user-defined grid.",
  "v.neighbors - Makes each cell value a function of attribute values and stores in an output raster map.",
  "v.normal - Tests for normality for points.",
  "v.out.dxf - Exports GRASS vector map layers to DXF file format.",
  "v.out.pov - Converts to POV-Ray format, GRASS x,y,z -> POV-Ray x,z,y",
  "v.outlier - Removes outliers from vector point data.",
  "v.overlay - Overlays two vector maps.",
  "v.parallel - Creates parallel line to input vector lines.",
  "v.patch - Create a new vector map layer by combining other vector map layers.",
  "v.perturb - Random location perturbations of GRASS vector points",
  "v.qcount - Indices for quadrant counts of sites lists.",
  "v.random - Randomly generate a 2D/3D vector points map.",
  "v.reclass - Changes vector category values for an existing vector map according to results of SQL queries or a value in ...",
  "v.report - Reports geometry statistics for vectors.",
  "v.sample - Samples a raster layer at vector point locations.",
  "v.segment - Creates points/segments from input vector lines and positions.",
  "v.select - Selects features from vector map (A) by features from other vector map (B).",
  "v.split.length - Split lines to shorter segments by length.",
  "v.split.vert - Split lines to shorter segments by max number of vertices.",
  "v.surf.bspline - Bicubic or bilinear spline interpolation with Tykhonov regularization.",
  "v.surf.bspline.lambda - Bicubic or bilinear spline interpolation with Tykhonov regularization.",
  "v.surf.bspline.sparse - Bicubic or bilinear spline interpolation with Tykhonov regularization.",
  "v.surf.idw - Surface interpolation from vector point data by Inverse Distance Squared Weighting.",
  "v.surf.rst - Spatial approximation and topographic analysis using regularized spline with tension.",
  "v.surf.rst.cvdev - Spatial approximation and topographic analysis using regularized spline with tension.",
  "v.surf.rst.cvdev.line - Spatial approximation and topographic analysis using regularized spline with tension.",
  "v.surf.rst.line - Spatial approximation and topographic analysis using regularized spline with tension.",
  "v.to.points - Create points along input lines",
  "v.to.rast.attribute - Converts (rasterize) a vector layer into a raster layer.",
  "v.to.rast.value - Converts (rasterize) a vector layer into a raster layer.",
  "v.transform - Performs an affine transformation on a vector layer.",
  "v.transform.pointsfile - Performs an affine transformation on a vector layer, using a support point file.",
  "v.univar - Calculates univariate statistics for attribute. Variance and standard deviation is calculated only for points if sp...",
  "v.voronoi - Creates a Voronoi diagram from an input vector layer containing points.",
];

const menus: [string, number][] = [
  ["Proyecto", 58], ["Edición", 49], ["Ver", 30], ["Capa", 40], ["Configuración", 81], ["Complementos", 85],
  ["Vectorial", 54], ["Ráster", 47], ["Base de datos", 83], ["Web", 37], ["Procesos", 59], ["Ayuda", 50],
];

const cells: [number, number, number, number][] = [
  [485, 162, 670, 174], [547, 162, 670, 175], [547, 174, 732, 298], [485, 298, 609, 360], [670, 298, 794, 360], [485, 360, 547, 483],
  [670, 360, 732, 483], [424, 483, 485, 607], [485, 607, 547, 854], [547, 730, 609, 792], [424, 854, 485, 915],
  [362, 915, 485, 977], [345, 977, 362, 996],
];

const harbour =
  "M40-179L163-168 141 0 123 105 131 124 179 101 193 0 200-35 244-612 437-601 403-49 285 33 310 68 345 44 349 47 314 73 333 100 382 67 384 71 338 104 358 132 393 109 397 113 345 150 347 160 335 169 330 167 323 156 286 183 287 191 274 199 269 196 235 217 230 212 192 230 187 236 188 243 204 261 215 281 222 280 228 287 231 268 540 235 572 35 850 47 853 580 846 580 845 559 831 562 829 550 838 545 838 428 743 415 736 538 784 540 782 553 496 558 430 542 420 553 362 610 354 604 362 599 384 578 381 572 424 530 416 520 437 489 420 470 400 449 395 452 380 472 362 507 332 508 332 536 325 536 325 508 319 508 319 535 312 535 312 508 306 508 306 535 299 535 299 508 294 508 294 532 287 532 287 508 281 508 281 530 275 530 275 508 270 508 268 520 264 520 264 506 209 506 209 511 254 511 254 516 209 516 209 522 253 522 253 527 209 527 209 532 252 532 252 536 209 536 209 540 252 540 252 544 211 544 211 551 186 552 176 573 185 600 165 625 172 645 203 622 215 627 215 607 221 607 221 630 226 631 226 607 232 607 232 634 239 636 239 607 245 607 245 639 254 643 254 607 259 645 267 648 266 607 273 650 281 654 280 607 284 655 291 658 291 608 303 605 305 613 309 616 309 656 320 656 318 601 329 600 331 676 398 674 416 620 421 622 397 722 380 748 347 737 337 728 317 723 300 708 285 699 231 696 205 685 185 670 168 648 146 613 143 600 170 398 203 402 190 355 157 276 142 282 127 225 120 165 85 102 79 70 92-33 80-105z";

const MapView = () => (
  <svg viewBox="345 162 1008 834" preserveAspectRatio="none">
    <g fill="#ffffb0" shapeRendering="crispEdges">
      {cells.map(([a, b, c, d], i) => <rect key={i} x={a} y={b} width={c - a} height={d - b} />)}
    </g>
    <path transform="translate(335 600) scale(.33333)" d="M20 310L30 319 46 332 108 361 183 379 194 422 202 436 239 487 259 530 283 573 284 588 276 605 272 620 263 624 200 607 149 598 122 605 50 631 38 628 30 620 20 610z" fill="#cd946f" stroke="#111" strokeWidth="3.200" />
    <g transform="translate(640 480) scale(.33333)" fill="#93ebde" stroke="#0c1c1a" strokeWidth="3.200" strokeLinejoin="round">
      <path d={harbour} />
      <path d="M680-563L684-566 689-563 688-557 683-553 618-403 619-389 613-389 609-284 611-275 605-274 592-24 593-12 589 33 584 33 602-360 608-403z" />
      <path d="M995-23L997-27H1008L1009-23 1010 300 1012 678 1007 682 1001 680 998 300z" />
    </g>
    <circle cx="696" cy="327" r="5.700" fill="#f00" stroke="#200" strokeWidth="1.200" />
  </svg>
);

const DockButtons = () => (<><DockBtn><RestoreI /></DockBtn><DockBtn><CloseX /></DockBtn></>);

const ramp: [string, string][] = [["#ffffb2", "1.000000"], ["#fecc5c", "2.250000"], ["#fd8d3c", "3.500000"], ["#f03b20", "4.750000"], ["#bd0026", "6.000000"]];

const Layer = ({ name, on = true, sel, last, children }: { name: string; on?: boolean; sel?: boolean; last?: boolean; children: React.ReactNode }) => (
  <LayerRow $b $sel={sel} $u={sel}>
    <Space $w={10} /><Node $w={13} $last={last} /><Check>{on && <XMark />}</Check><Space $w={6} />{children}<Space $w={6} /><Name>{name}</Name>
  </LayerRow>
);

export default function App() {
  return (
    <Screen>
      <Global />
      <TitleBar>
        <Logo w={15} />QGIS 2.8.1-Wien - a<Grow />
        <WinBtns>
          <WinBtn><Svg $w={9} viewBox="0 0 9 9"><path d="M1 7h6v2H1z" /></Svg></WinBtn>
          <WinBtn><RestoreI /></WinBtn>
          <WinBtn $gap><Svg $w={8} viewBox="0 0 9 9"><path d="M1 1l7 7M8 1L1 8" stroke="#000" strokeWidth="1.800" /></Svg></WinBtn>
        </WinBtns>
      </TitleBar>
      <MenuBar>{menus.map(([t, w]) => <MenuItem key={t} $w={w}>{t}</MenuItem>)}</MenuBar>
      <ToolBar $h={39}>
        <Tools list={["^", "new", "open", "save", "saveas", "composer", "composerMgr", "|", "touch", "hand", "pansel", "zin", "zout", "z11", "zfull", "zsel", "zlayer", "zprev", "znext", "refresh", "|", "identify", "action", "vo", "select", "v", "desel", "expr", "table", "abacus", "measure", "v", "tip", "bmnew", "bmshow", "anno", "v", "|", "help", "whats"]} />
      </ToolBar>
      <ToolBar $h={39}>
        <Tools list={["^", "edits", "pencil", "saveG", "ptsG", "moveG", "nodeG", "trash", "cut", "copy", "paste", "|", "cad", "undo", "redo", "rotG", "simp", "ringG", "partG", "fillG", "delring", "delpart", "reshape", "offset", "splitG", "splitP", "mergeG", "weld", "rotpt", "|", "lab", "labsel", "labpin", "labeye", "labmove", "labrot", "labedit", "|", "csw", "|", "python"]} />
      </ToolBar>
      <ToolBar $h={38}>
        <Tools list={["^", "gOpen", "gNew", "gClose", "-", "gVec", "gRas", "gVecN", "gVecE", "gTools", "gReg", "gRegE", "||", "cross", "compass", "gps", "topo", "georef"]} />
      </ToolBar>

      <Work>
        <SideBar>
          <HGrip $w={42} />
          {["vAdd", "rAdd", "pgAdd", "slAdd", "msAdd", "orAdd", "orrAdd", "wmsAdd", "wcsAdd", "wfsAdd", "csvAdd"].map((n) => <SideSlot key={n}><Icon n={n} /></SideSlot>)}
          <SideSlot $drop><Icon n="vNew" /><Drop /></SideSlot>
          <SideSlot><Icon n="gpxNew" /></SideSlot>
        </SideBar>

        <LeftDock>
          <DockTitle $pad={2} $end={1}><HGrip $w={103} /><TitleText $w={43} $ls={-0.4}>Capas</TitleText><HGrip $w={103} /><Grow /><DockButtons /></DockTitle>
          <SmallTools $mt={7} $h={28}>
            {["groupAdd", "eye", "filter", "expand", "collapse", "removeL"].map((n) => <Icon key={n} n={n} w={17} />)}
          </SmallTools>
          <Frame $h={239}>
            <Layer name="Puntos puertos" sel><Svg $w={16} viewBox="0 0 16 16"><circle cx="8" cy="8" r="5.700" fill="#b81024" stroke="#222" /></Svg></Layer>
            <Layer name="Puertos objetivo"><Swatch $c="#93ebde" $line /></Layer>
            <LayerRow $b><Space $w={5} /><Expander open /><Dash $w={6} /><Space $w={3} /><Check><XMark /></Check><Space $w={6} /><Raster /><Space $w={6} /><Name>Coste carreteras</Name></LayerRow>
            {ramp.map(([c, t], i) => (
              <LayerRow key={t}><Space $w={10} /><Pass $w={20} /><Node $w={10} $last={i === 4} /><Space $w={3} /><Swatch $c={c} /><Space $w={5} /><Name>{t}</Name></LayerRow>
            ))}
            <Layer name="Zona industrial"><Swatch $c="#cd946f" $line /></Layer>
            <Layer name="Carreteras aptas" on={false}><Svg $w={16} viewBox="0 0 16 16"><path d="M0 8.500h16" stroke="#444" /></Svg></Layer>
            <Layer name="Zona interés" last><Swatch $c="#9d9d9d" $line /></Layer>
          </Frame>
          <Splitter />
          <DockTitle $pad={2} $end={1}><HGrip $w={48} /><TitleText $w={154}>Resultados de la identificación</TitleText><HGrip $w={48} /><Grow /><DockButtons /></DockTitle>
          <SmallTools $mt={7} $h={28}>
            {["expand", "collapse", "starTree", "form", "deselS", "copy", "print"].map((n) => <Icon key={n} n={n} w={17} />)}
          </SmallTools>
          <Frame $h={429}>
            <HeadRow><HeadCell $w={158}>Objeto espacial</HeadCell><HeadCell $w={124}>Valor</HeadCell></HeadRow>
          </Frame>
          <FormRow $mt={5} $h={20}>
            <Cell $w={33}>Modo</Cell>
            <Box $w={114} $h={20}><Name>Capa actual</Name><BoxArrow><Tri /></BoxArrow></Box>
            <Space $w={6} /><Check /><Space $w={5} /><Name>Auto abrir formulario</Name>
          </FormRow>
          <FormRow $mt={8} $h={22}>
            <Cell $w={22}>Ver</Cell>
            <Box $w={72} $h={20}><Name>Árbol</Name><BoxArrow><Tri /></BoxArrow></Box>
            <Grow /><Box $w={47} $h={22} $center>Ayuda</Box>
          </FormRow>
        </LeftDock>
        <VSplit $w={5} $mt={281} $h={273} />
        <MapFrame><MapView /></MapFrame>
        <VSplit $w={6} $mt={281} $h={273} />

        <RightDock>
          <DockTitle $pad={4} $end={1}><HGrip $w={234} /><TitleText $w={182}>Caja de herramientas de procesado</TitleText><HGrip $w={234} /><Grow /><DockButtons /></DockTitle>
          <Search>Buscar...</Search>
          <TreeFrame>
            <TreeList>
              {algs.map((a, i) => (
                <AlgRow key={a} $sel={i === 38}>
                  <Pass $w={20} /><Pass $w={20} /><Node $w={11} $last={i === algs.length - 1} />
                  <Leaf sel={i === 38} /><AlgName>{a}</AlgName>
                </AlgRow>
              ))}
              <AlgRow $h={14}><Pass $w={15} /><Expander /><Dash $w={6} /><Space $w={3} /><span>Visualization(NVIZ)</span></AlgRow>
              <AlgRow $in={6}><Expander /><Dash $w={6} /><Space $w={3} />
                <Svg $w={16} viewBox="0 0 16 16"><circle cx="8" cy="8" r="7" fill="#e8f8ff" stroke="#25b8e8" strokeWidth="1.500" /><path d="M12.500 1.500Q5 1 4.500 5q1 2.500 5 3 3 2 1 5-3 2-7 0M2 3l11 9M1.500 8.500l7 6M8 2l6 5" stroke="#1020d8" strokeWidth="1.900" fill="none" /></Svg>
                <Space $w={5} /><span>SAGA (2.1.2) [235 geoalgoritmos]</span></AlgRow>
              <AlgRow $in={6}><Expander /><Dash $w={6} /><Space $w={3} />
                <Svg $w={16} viewBox="0 0 16 16"><rect x=".7" y=".7" width="14.600" height="14.600" rx="1.500" fill="#1e2a1c" stroke="#777" strokeWidth="1.400" /><path d="M3.500 4l3 2.500-3 2.500M8 10h4" stroke="#e8f0e0" fill="none" /></Svg>
                <Space $w={5} /><span>Scripts [0 geoalgoritmos]</span></AlgRow>
            </TreeList>
            <Scroll>
              <ScrollBtn><Tri $up /></ScrollBtn><Track /><Thumb /><ScrollBtn><Tri $up /></ScrollBtn><ScrollBtn><Tri /></ScrollBtn>
            </Scroll>
          </TreeFrame>
          <FormRowWide><Box $w={688} $h={20}>Advanced interface<BoxArrow><Tri /></BoxArrow></Box></FormRowWide>
        </RightDock>
      </Work>

      <StatusBar>
        <Box $w={20} $h={20} $center><Svg $w={16} viewBox="0 0 16 16"><ellipse cx="6" cy="6" rx="3.500" ry="5" transform="rotate(-25 6 6)" fill="#fff" stroke="#222" strokeWidth="1.500" /><path d="M5 2l2 6M3 8l4-2M11 4l4-2M9 5l2 2" stroke="#222" strokeWidth="1.300" /><circle cx="10" cy="11" r="3.800" fill="#bbb" stroke="#222" strokeWidth="1.800" /><circle cx="10" cy="11" r="1.200" /></Svg></Box>
        <Space $w={9} /><Cell $w={72}>Coordenada:</Cell>
        <Box $w={300} $h={20} $white $center><Name>277591,4000978</Name></Box>
        <Space $w={8} /><Cell $w={43}>Escala</Cell>
        <Box $w={88} $h={20} $white><Name>1:30.626</Name><BoxArrow><Tri /></BoxArrow></Box>
        <Space $w={9} /><Cell $w={56}>Rotación:</Cell>
        <Box $w={98} $h={24} $white><Name>0,0</Name><BoxArrow><SpinHalf><Tri $up /></SpinHalf><SpinHalf><Tri /></SpinHalf></BoxArrow></Box>
        <Space $w={7} /><Check><XMark /></Check><Space $w={4} /><Cell $w={78}>Representar</Cell>
        <Svg $w={16} viewBox="0 0 16 16"><circle cx="8" cy="8" r="6" fill="#8a8a8a" stroke="#222" strokeWidth="2.400" /><path d="M8 3l3.500 3.500v3L8 13 4.500 9.500v-3z" fill="#d8d8d8" stroke="#444" /><path d="M8 0v16M0 8h16" stroke="#333" strokeWidth=".9" /></Svg>
        <Space $w={3} /><Cell $w={129}>EPSG:25830 (al vuelo)</Cell>
        <Svg $w={17} viewBox="0 0 16 16"><path d="M8 1q7 0 7 6 0 4-3 5l1 4-5-3Q1 13 1 7q0-6 7-6z" fill="#666" /></Svg>
      </StatusBar>

      <TaskBar>
        <TaskBtn $w={54}>
          <Svg $w={16} viewBox="0 0 16 16"><path d="M2 2q3-1 5 1L6 8Q4 6 1 7z" fill="#e8542c" /><path d="M8 3q3 1 6 0l-1 5q-3 1-6 0z" fill="#7db83a" /><path d="M1 8q3-1 5 1l-1 5Q3 12 0 13z" fill="#3f7fd0" /><path d="M7 9q3 1 6 0l-1 5q-3 1-6 0z" fill="#f4bf2a" /></Svg>Inicio
        </TaskBtn>
        <TaskBtn $w={28} $ml={9}>
          <Svg $w={17} viewBox="0 0 16 16"><path d="M1 2h5l1 2h8v9H1z" fill="#f2dc84" stroke="#c9a63c" strokeWidth=".7" /><path d="M3 8h10l1.500 7h-3v-4h-7v4h-3z" fill="#5fb0e8" stroke="#3a80b8" strokeWidth=".6" /></Svg>
        </TaskBtn>
        <TaskBtn $w={4} />
        <TaskBtn $w={28} $ml={4} $flat>
          <Svg $w={15} viewBox="0 0 16 16"><circle cx="8" cy="8" r="7.500" fill="#e33b2e" /><path d="M8 8L1.500 4.500Q-1 10 4 14l2 1.400z" fill="#2da94f" /><path d="M8 8l7-2.500Q17 14 7 15.500z" fill="#fdc727" /><circle cx="8" cy="8" r="3.600" fill="#fff" /><circle cx="8" cy="8" r="2.700" fill="#4285f4" /></Svg>
        </TaskBtn>
        <TaskBtn $w={32} $ml={4} $in><Logo w={16} /></TaskBtn>
        <Grow />ES
        <Tray>
          <Svg $w={9} viewBox="0 0 9 9"><path d="M2 4l2.500-2.500L7 4M2 8l2.500-2.500L7 8" stroke="#000" strokeWidth="1.300" fill="none" /></Svg>
          <Svg $w={17} viewBox="0 0 16 16"><path d="M1 5h3l4-4v14l-4-4H1z" fill="#fff" stroke="#777" /><path d="M10 5q2 3 0 6M12 3q4 5 0 10" fill="none" stroke="#888" /></Svg>
          <Svg $w={17} viewBox="0 0 16 16"><path d="M4 4h11v8H4z" fill="#d0d0d0" stroke="#666" strokeWidth="1.400" /><path d="M6 14.500h8" stroke="#666" strokeWidth="1.800" /><path d="M1 1h4v6H1zM3 7v7" fill="#fff" stroke="#666" /></Svg>
          <Svg $w={17} viewBox="0 0 16 16"><path d="M2 1v15" stroke="#666" strokeWidth="1.500" /><path d="M3 2h6v2h6l-2 5H8V8H3z" fill="#fff" stroke="#777" /></Svg>
          <Space $w={3} /><Cell $w={25}>6:40</Cell>
          <Svg $w={16} viewBox="0 0 16 16"><path d="M0 2h16v10H0z" fill="#2c6fc0" /><path d="M0 12h16v2H0z" fill="#1b2f4a" /><circle cx="3" cy="11" r="1.500" fill="#f09030" /></Svg>
        </Tray>
      </TaskBar>
    </Screen>
  );
}
